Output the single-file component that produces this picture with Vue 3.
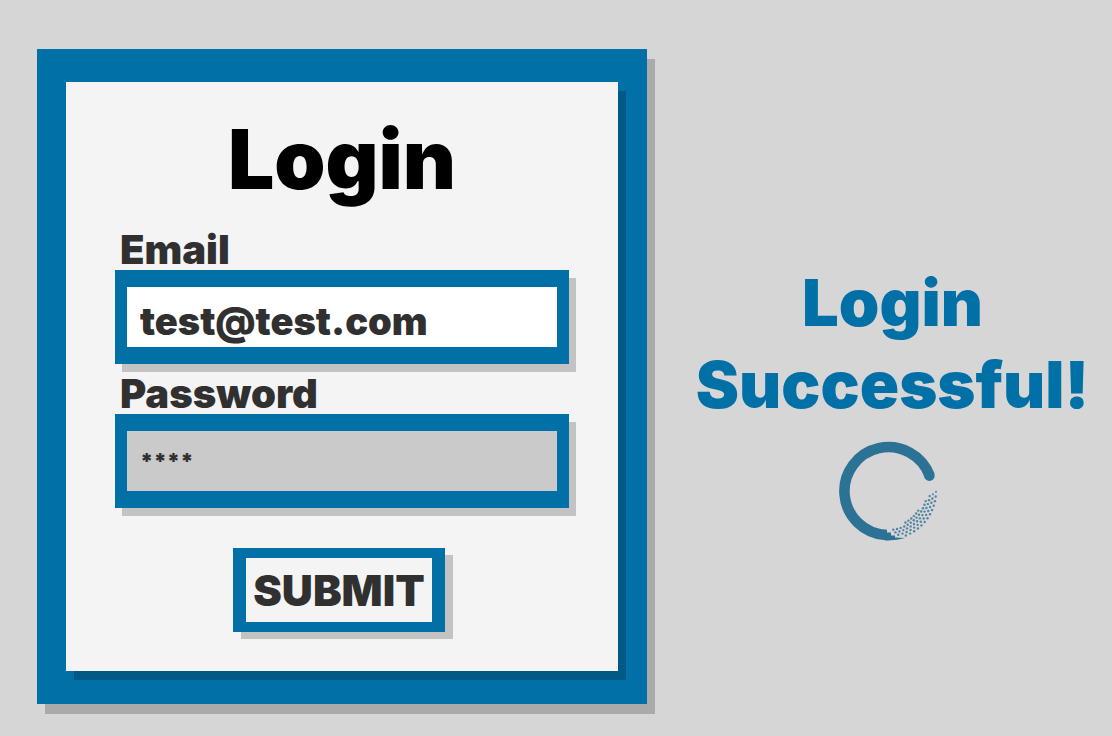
<script setup>
import { ref } from 'vue'

const email = ref('test@test.com')
const password = ref('****')

// Each row of dots follows the ring, given as radius, first and last angle in degrees.
const rows = [
  { r: 36, from: 33, to: 62 },
  { r: 39, from: 15, to: 86 },
  { r: 42, from: 7, to: 82 },
  { r: 45, from: 4, to: 78 },
  { r: 48, from: 1, to: 70 }
]
const dots = rows.flatMap(({ r, from, to }) => {
  const list = []
  for (let a = from; a <= to; a += 5.6) {
    const t = (a * Math.PI) / 180
    list.push({ x: 50 + r * Math.cos(t), y: 50 + r * Math.sin(t), s: a < 6 ? 1 : 1.2 })
  }
  return list
})
</script>

<template>
  <main class="page">
    <section class="frame">
      <form class="card" @submit.prevent>
        <h1 class="title">Login</h1>
        <label class="label" for="email">Email</label>
        <input id="email" v-model="email" class="field" type="text" autocomplete="off" spellcheck="false" />
        <label class="label" for="password">Password</label>
        <input id="password" v-model="password" class="field field-muted" type="text" autocomplete="off" />
        <button class="submit" type="submit">SUBMIT</button>
      </form>
    </section>

    <section class="status" role="status">
      <p class="message">Login<br />Successful!</p>
      <svg class="spinner" viewBox="0 0 100 100" aria-hidden="true">
        <path
          d="M91.6 34.5A44 44 0 1 0 48 94"
          fill="none"
          stroke="#2b7294"
          stroke-width="10.6"
        />
        <circle cx="91.4" cy="34.6" r="5.3" fill="#2b7294" />
        <path d="M47 88.7H49V91.5H53V94.5H57V96.5L67 97L59 98.8L50 99.4H47Z" fill="#2b7294" />
        <circle v-for="(d, i) in dots" :key="i" :cx="d.x" :cy="d.y" :r="d.s" fill="#4f85a3" />
      </svg>
    </section>
  </main>
</template>

<style>
body {
  background: #d6d6d6;
}
</style>

<style scoped>
.page {
  box-sizing: border-box;
  min-height: 100vh;
  padding: 49px 0 32px 37px;
  display: grid;
  grid-template-columns: 610fr 465fr;
  align-items: start;
  font-family: Inter, "Liberation Sans", sans-serif;
  font-weight: 900;
  color: #303030;
}
.frame {
  padding: 33px 29px;
  background: #0070a6;
  box-shadow: 8px 10px 0 #aaaaaa;
}
.card {
  display: flex;
  flex-direction: column;
  padding: 24px 49px 39px;
  background: #f4f4f4;
  box-shadow: 8px 9px 0 #005a85;
}
.title {
  margin: 0 0 16px;
  font-size: 82px;
  font-weight: 900;
  line-height: 108px;
  text-align: center;
  color: #000;
}
.label {
  height: 40px;
  padding-left: 5px;
  font-size: 40px;
  line-height: 40px;
}
.field {
  box-sizing: border-box;
  width: 100%;
  height: 94px;
  margin: 0 0 10px;
  padding: 8px 13px 0;
  border: 17px solid #0070a6;
  border-width: 17px 12px;
  border-radius: 0;
  outline: 0;
  background: #fff;
  box-shadow: 7px 8px 0 #c3c3c3;
  color: inherit;
  font: inherit;
  font-size: 38px;
}
.field-muted {
  padding: 0 13px;
  background: #cacaca;
  font-size: 22px;
}
.submit {
  align-self: center;
  height: 84px;
  margin: 30px 6px 0 0;
  padding: 0 7px;
  border: 10px solid #0070a6;
  border-width: 10px 13px;
  background: #f4f4f4;
  box-shadow: 8px 7px 0 #c3c3c3;
  color: inherit;
  font: inherit;
  font-size: 43px;
}
.status {
  display: flex;
  flex-direction: column;
  align-items: center;
  padding: 213px 0 0 26px;
}
.message {
  margin: 0 0 15px;
  font-size: 65px;
  line-height: 82px;
  text-align: center;
  color: #0070a6;
}
.spinner {
  width: 100px;
  height: 100px;
  margin-right: 10px;
}
</style>
